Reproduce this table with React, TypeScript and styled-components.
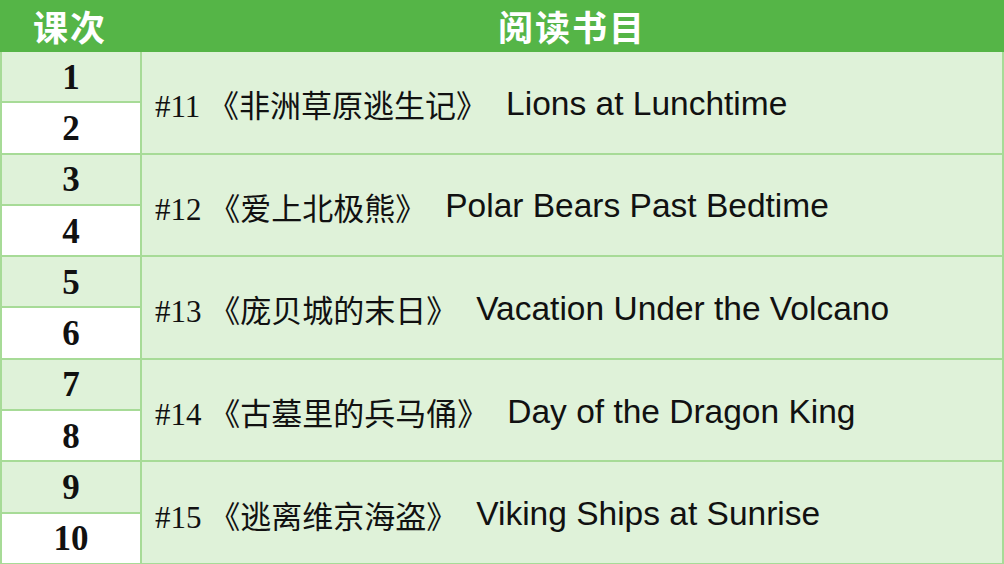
import styled, { createGlobalStyle } from 'styled-components';

const GlobalStyle = createGlobalStyle`
  html, body {
    margin: 0;
    padding: 0;
    background: #ffffff;
  }
`;

const colors = {
  header: '#55b547',
  light: '#dff2d9',
  line: '#a7db97',
  text: '#111111',
};

const lessons = [
  { no: '#11', cn: '《非洲草原逃生记》', en: 'Lions at Lunchtime' },
  { no: '#12', cn: '《爱上北极熊》', en: 'Polar Bears Past Bedtime' },
  { no: '#13', cn: '《庞贝城的末日》', en: 'Vacation Under the Volcano' },
  { no: '#14', cn: '《古墓里的兵马俑》', en: 'Day of the Dragon King' },
  { no: '#15', cn: '《逃离维京海盗》', en: 'Viking Ships at Sunrise' },
];

function App() {
  return (
    <>
      <GlobalStyle />
      <Sheet>
        <HeaderRow>
          <HeaderCell $width="140px">课次</HeaderCell>
          <HeaderCell $width="auto">阅读书目</HeaderCell>
        </HeaderRow>
        <Body>
          {lessons.map((item, i) => (
            <>
              <NumCell key={`a${i}`} $shaded>{i * 2 + 1}</NumCell>
              <TitleCell key={`t${i}`}>
                <Serif>{item.no} {item.cn}</Serif>
                <Sans>{item.en}</Sans>
              </TitleCell>
              <NumCell key={`b${i}`}>{i * 2 + 2}</NumCell>
            </>
          ))}
        </Body>
      </Sheet>
    </>
  );
}

export default App;

const Sheet = styled.div`
  width: 1004px;
  height: 564px;
  display: flex;
  flex-direction: column;
  overflow: hidden;
`;

const HeaderRow = styled.div`
  height: 52px;
  display: flex;
  background-color: ${colors.header};
`;

const HeaderCell = styled.div<{ $width: string }>`
  width: ${(p) => p.$width};
  flex: ${(p) => (p.$width === 'auto' ? 1 : 'none')};
  display: flex;
  align-items: center;
  justify-content: center;
  color: #ffffff;
  font-family: "Noto Sans CJK SC", sans-serif;
  font-weight: 700;
  font-size: 35px;
  line-height: 1;
  letter-spacing: 2px;
  padding-bottom: 1px;
`;

const Body = styled.div`
  flex: 1;
  display: grid;
  grid-template-columns: 138px 1fr;
  grid-template-rows: repeat(10, 1fr);
  grid-auto-flow: row;
  gap: 2px;
  padding: 0 2px 1px 2px;
  background-color: ${colors.line};
`;

const NumCell = styled.div<{ $shaded?: boolean }>`
  grid-column: 1;
  display: flex;
  align-items: center;
  justify-content: center;
  background-color: ${(p) => (p.$shaded ? colors.light : '#ffffff')};
  color: ${colors.text};
  font-family: "Liberation Serif", serif;
  font-weight: 700;
  font-size: 35px;
  padding-top: 2px;
`;

const TitleCell = styled.div`
  grid-column: 2;
  grid-row: span 2;
  display: flex;
  align-items: center;
  padding-left: 13px;
  padding-top: 3px;
  background-color: ${colors.light};
  color: ${colors.text};
  white-space: pre;
`;

const Serif = styled.span`
  font-family: "Liberation Serif", "Noto Sans CJK SC", serif;
  font-size: 31px;
`;

const Sans = styled.span`
  margin-left: 19px;
  font-family: "Liberation Sans", sans-serif;
  font-size: 33.5px;
`;
